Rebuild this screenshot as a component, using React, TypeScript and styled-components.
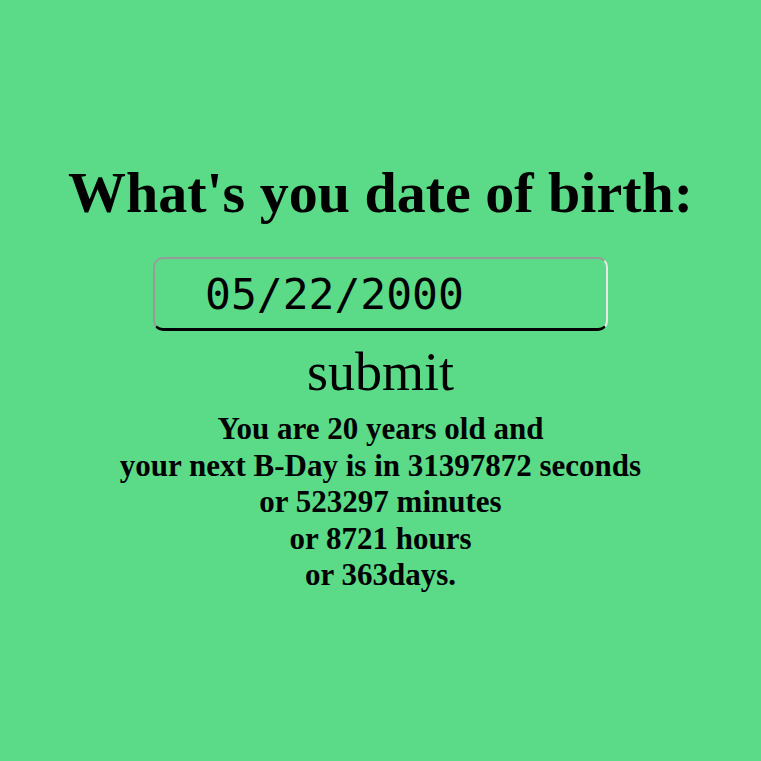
import React, { useState } from 'react';
import styled, { createGlobalStyle } from 'styled-components';

const GlobalStyle = createGlobalStyle`
  html, body {
    margin: 0;
    padding: 0;
    background-color: #5bdb87;
  }
`;

const App = () => {
  const [date, setDate] = useState('05/22/2000');

  return (
    <StPage>
      <GlobalStyle />
      <StTitle>What's you date of birth:</StTitle>
      <StInput value={date} onChange={(e) => setDate(e.target.value)} />
      <StSubmit type="button">submit</StSubmit>
      <StResult>
        You are 20 years old and
        <br />
        your next B-Day is in 31397872 seconds
        <br />
        or 523297 minutes
        <br />
        or 8721 hours
        <br />
        or 363days.
      </StResult>
    </StPage>
  );
};

export default App;

const StPage = styled.div`
  width: 761px;
  height: 761px;
  display: flex;
  flex-direction: column;
  align-items: center;
  padding-top: 160px;
  box-sizing: border-box;
  font-family: 'Liberation Serif', 'Times New Roman', serif;
  color: #000;
`;

const StTitle = styled.h1`
  margin: 0;
  font-size: 58px;
  line-height: 66px;
  font-weight: bold;
`;

const StInput = styled.input`
  margin-top: 31px;
  width: 455px;
  height: 74px;
  box-sizing: border-box;
  padding: 0 0 0 50px;
  background: transparent;
  border-radius: 10px;
  border-top: 2px solid #9a9a9a;
  border-left: 2px solid #9a9a9a;
  border-right: 2px solid #e8e8e8;
  border-bottom: 3px solid #000;
  font-family: 'DejaVu Sans Mono', monospace;
  font-size: 43px;
  color: #000;
  outline: none;
`;

const StSubmit = styled.button`
  margin-top: 10px;
  padding: 0;
  border: none;
  background: transparent;
  font-family: 'Liberation Serif', 'Times New Roman', serif;
  font-size: 54px;
  line-height: 62px;
  color: #000;
  cursor: pointer;
`;

const StResult = styled.div`
  margin-top: 8px;
  font-size: 31px;
  line-height: 36.5px;
  font-weight: bold;
  text-align: center;
`;
